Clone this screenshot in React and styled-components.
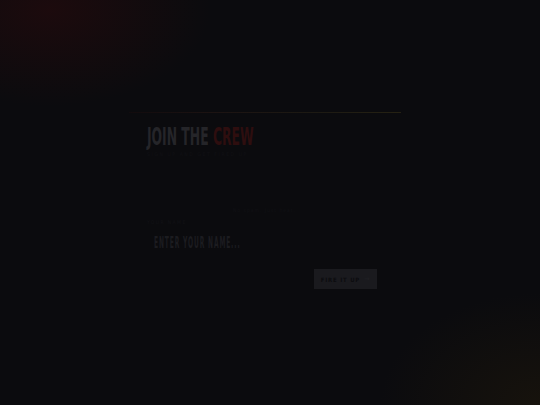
import React, { useState } from "react";
import styled, { createGlobalStyle } from "styled-components";

const GlobalStyle = createGlobalStyle`
  html, body {
    margin: 0;
    padding: 0;
    height: 100%;
    background: #0b0b0e;
  }
  #root {
    height: 100%;
  }
`;

const Page = styled.div`
  position: relative;
  width: 540px;
  height: 405px;
  overflow: hidden;
  background:
    radial-gradient(ellipse 200px 120px at 50px 10px, rgba(45, 10, 12, 0.5), transparent 80%),
    radial-gradient(ellipse 200px 140px at 540px 405px, rgba(40, 30, 10, 0.4), transparent 80%),
    #0b0b0e;
  display: flex;
  justify-content: center;
  padding-top: 112px;
  box-sizing: border-box;
  font-family: "DejaVu Sans Condensed", "Liberation Sans", sans-serif;
`;

const Card = styled.div`
  width: 272px;
  margin-right: 10px;
  display: flex;
  flex-direction: column;
`;

const TopLine = styled.div`
  height: 1px;
  background: linear-gradient(90deg, rgba(35, 12, 12, 0.3), #1c1312 30%, #1d1a13 70%, #262213);
`;

const Body = styled.div`
  padding: 10px 14px 0 18px;
  display: flex;
  flex-direction: column;
`;

const Title = styled.h1`
  margin: 0;
  font-size: 25px;
  line-height: 28px;
  font-weight: 700;
  color: #252529;
  transform: scaleX(0.55);
  transform-origin: left center;
  white-space: nowrap;
`;

const Accent = styled.span`
  color: #2e0e0f;
`;

const Subtitle = styled.p`
  margin: 0;
  font-size: 5px;
  letter-spacing: 1.6px;
  text-transform: uppercase;
  color: #111115;
`;

const Note = styled.p`
  margin: 50px 0 0 86px;
  font-size: 5px;
  letter-spacing: 1px;
  color: #111115;
`;

const Label = styled.label`
  margin-top: 6px;
  font-size: 5px;
  letter-spacing: 1.4px;
  text-transform: uppercase;
  color: #121216;
`;

const Input = styled.input`
  margin-top: 7px;
  width: 500px;
  height: 22px;
  border: none;
  background: transparent;
  padding: 0 0 0 16px;
  font-family: inherit;
  font-size: 15px;
  font-weight: 700;
  letter-spacing: 2px;
  color: #1e1e22;
  outline: none;
  transform: scaleX(0.44);
  transform-origin: left center;
  &::placeholder {
    color: #1c1c20;
    text-transform: uppercase;
  }
`;

const Actions = styled.div`
  margin-top: 15px;
  display: flex;
  justify-content: flex-end;
  padding-right: 10px;
`;

const Button = styled.button`
  width: 63px;
  height: 20px;
  border: none;
  padding: 0;
  background: #1a1a1e;
  color: #0c0c0f;
  font-family: inherit;
  font-size: 6px;
  font-weight: 700;
  letter-spacing: 0.8px;
  text-transform: uppercase;
  white-space: nowrap;
  display: flex;
  align-items: center;
  justify-content: center;
  gap: 4px;
  cursor: pointer;
`;

const Arrow = styled.span`
  color: #202024;
  font-size: 7px;
`;

export default function App() {
  const [name, setName] = useState("");
  return (
    <>
      <GlobalStyle />
      <Page>
        <Card>
          <TopLine />
          <Body>
            <Title>
              JOIN THE <Accent>CREW</Accent>
            </Title>
            <Subtitle>Sign up and get fired up</Subtitle>
            <Note>No spam. Just heat.</Note>
            <Label htmlFor="name">Your name</Label>
            <Input
              id="name"
              value={name}
              onChange={(e) => setName(e.target.value)}
              placeholder="Enter your name..."
            />
            <Actions>
              <Button>
                Fire it up <Arrow>→</Arrow>
              </Button>
            </Actions>
          </Body>
        </Card>
      </Page>
    </>
  );
}
